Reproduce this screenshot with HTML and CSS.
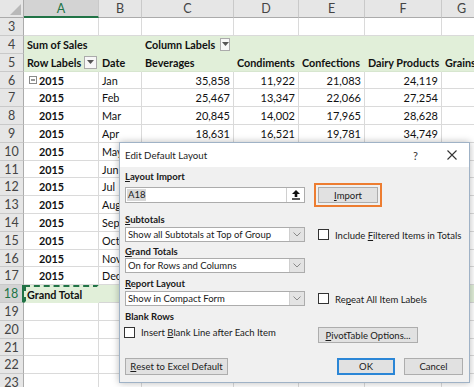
FILE: index.html
```html
<!DOCTYPE html>
<html>
<head>
<meta charset="utf-8">
<link rel="stylesheet" href="styles.css">
</head>
<body>
<div class="sheet">
  <div class="corner"><svg width="12" height="12" viewBox="0 0 12 12"><polygon points="12,1 12,12 1,12" fill="#b9b9b9"/></svg></div>
  <div class="ch sel">A</div><div class="ch">B</div><div class="ch">C</div><div class="ch">D</div><div class="ch">E</div><div class="ch">F</div><div class="ch">G</div>

  <div class="rh">3</div><div class="c"></div><div class="c"></div><div class="c"></div><div class="c"></div><div class="c"></div><div class="c"></div><div class="c"></div>

  <div class="rh">4</div>
  <div class="c g b">Sum of Sales</div><div class="c g"></div>
  <div class="c g b">Column Labels<span class="dd cdd"><svg width="7" height="4" viewBox="0 0 7 4"><polygon points="0,0 7,0 3.5,4" fill="#555"/></svg></span></div>
  <div class="c g"></div><div class="c g"></div><div class="c g"></div><div class="c g"></div>

  <div class="rh">5</div>
  <div class="c g g5 b">Row Labels<span class="dd rdd"><svg width="7" height="4" viewBox="0 0 7 4"><polygon points="0,0 7,0 3.5,4" fill="#555"/></svg></span></div>
  <div class="c g g5 b">Date</div><div class="c g g5 b">Beverages</div><div class="c g g5 b">Condiments</div><div class="c g g5 b">Confections</div><div class="c g g5 b">Dairy Products</div><div class="c g g5 b">Grains</div>

  <div class="rh">6</div>
  <div class="c b first"><span class="minus"><svg width="8" height="8" viewBox="0 0 8 8"><rect x="0.5" y="0.5" width="7" height="7" fill="#fff" stroke="#8a8a8a"/><rect x="2" y="3.5" width="4" height="1" fill="#333"/></svg></span>2015</div>
  <div class="c">Jan</div><div class="c n">35,858</div><div class="c n">11,922</div><div class="c n">21,083</div><div class="c n">24,119</div><div class="c"></div>

  <div class="rh">7</div>
  <div class="c b yr">2015</div><div class="c">Feb</div><div class="c n">25,467</div><div class="c n">13,347</div><div class="c n">22,066</div><div class="c n">27,254</div><div class="c"></div>

  <div class="rh">8</div>
  <div class="c b yr">2015</div><div class="c">Mar</div><div class="c n">20,845</div><div class="c n">14,002</div><div class="c n">17,965</div><div class="c n">28,628</div><div class="c"></div>

  <div class="rh">9</div>
  <div class="c b yr">2015</div><div class="c">Apr</div><div class="c n">18,631</div><div class="c n">16,521</div><div class="c n">19,781</div><div class="c n">34,749</div><div class="c"></div>

  <div class="rh">10</div>
  <div class="c b yr">2015</div><div class="c">May</div><div class="c"></div><div class="c"></div><div class="c"></div><div class="c"></div><div class="c"></div>
  <div class="rh">11</div>
  <div class="c b yr">2015</div><div class="c">Jun</div><div class="c"></div><div class="c"></div><div class="c"></div><div class="c"></div><div class="c"></div>
  <div class="rh">12</div>
  <div class="c b yr">2015</div><div class="c">Jul</div><div class="c"></div><div class="c"></div><div class="c"></div><div class="c"></div><div class="c"></div>
  <div class="rh">13</div>
  <div class="c b yr">2015</div><div class="c">Aug</div><div class="c"></div><div class="c"></div><div class="c"></div><div class="c"></div><div class="c"></div>
  <div class="rh">14</div>
  <div class="c b yr">2015</div><div class="c">Sep</div><div class="c"></div><div class="c"></div><div class="c"></div><div class="c"></div><div class="c"></div>
  <div class="rh">15</div>
  <div class="c b yr">2015</div><div class="c">Oct</div><div class="c"></div><div class="c"></div><div class="c"></div><div class="c"></div><div class="c"></div>
  <div class="rh">16</div>
  <div class="c b yr">2015</div><div class="c">Nov</div><div class="c"></div><div class="c"></div><div class="c"></div><div class="c"></div><div class="c"></div>
  <div class="rh">17</div>
  <div class="c b yr">2015</div><div class="c">Dec</div><div class="c"></div><div class="c"></div><div class="c"></div><div class="c"></div><div class="c"></div>

  <div class="rh sel">18</div>
  <div class="c g b ants">Grand Total</div><div class="c g gt"></div><div class="c g gt"></div><div class="c g gt"></div><div class="c g gt"></div><div class="c g gt"></div><div class="c g gt"></div>

  <div class="rh">19</div><div class="c"></div><div class="c"></div><div class="c"></div><div class="c"></div><div class="c"></div><div class="c"></div><div class="c"></div>
  <div class="rh">20</div><div class="c"></div><div class="c"></div><div class="c"></div><div class="c"></div><div class="c"></div><div class="c"></div><div class="c"></div>
  <div class="rh">21</div><div class="c"></div><div class="c"></div><div class="c"></div><div class="c"></div><div class="c"></div><div class="c"></div><div class="c"></div>
  <div class="rh">22</div><div class="c"></div><div class="c"></div><div class="c"></div><div class="c"></div><div class="c"></div><div class="c"></div><div class="c"></div>
  <div class="rh">23</div><div class="c"></div><div class="c"></div><div class="c"></div><div class="c"></div><div class="c"></div><div class="c"></div><div class="c"></div>
</div>

<div class="dialog">
  <div class="titlebar">
    <span class="title">Edit Default Layout</span>
    <span class="help">?</span>
    <span class="close"><svg width="10" height="10" viewBox="0 0 10 10"><path d="M0.5 0.5 L9.5 9.5 M9.5 0.5 L0.5 9.5" stroke="#333" stroke-width="1.1"/></svg></span>
  </div>
  <div class="dbody">
    <div class="lbl r1"><u>L</u>ayout Import</div>
    <div class="r1"></div>

    <div class="ctl r2">
      <div class="input"><span class="val"><span class="selected">A18</span></span><span class="upbtn"><svg width="8" height="10" viewBox="0 0 8 10"><polygon points="4,0 8,4 5.3,4 5.3,7 2.7,7 2.7,4 0,4" fill="#111"/><rect x="0" y="8.3" width="8" height="1.4" fill="#111"/></svg></span></div>
    </div>
    <div class="r2 impwrap"><div class="focusring"><span class="btn imp"><u>I</u>mport</span></div></div>

    <div class="lbl r3"><u>S</u>ubtotals</div>
    <div class="r3"></div>

    <div class="ctl r4">
      <div class="select"><span class="val">Show all Subtotals at Top of Group</span><span class="arrow"><svg width="8" height="5" viewBox="0 0 8 5"><path d="M0.5 0.5 L4 4 L7.5 0.5" fill="none" stroke="#8a8a8a" stroke-width="1"/></svg></span></div>
    </div>
    <div class="ctl r4"><span class="chk"></span><span class="cl">Include <u>F</u>iltered Items in Totals</span></div>

    <div class="lbl r5"><u>G</u>rand Totals</div>
    <div class="r5"></div>

    <div class="ctl r6">
      <div class="select"><span class="val">On for Rows and Columns</span><span class="arrow"><svg width="8" height="5" viewBox="0 0 8 5"><path d="M0.5 0.5 L4 4 L7.5 0.5" fill="none" stroke="#8a8a8a" stroke-width="1"/></svg></span></div>
    </div>
    <div class="r6"></div>

    <div class="lbl r7"><u>R</u>eport Layout</div>
    <div class="r7"></div>

    <div class="ctl r8">
      <div class="select"><span class="val">Show in Compact Form</span><span class="arrow"><svg width="8" height="5" viewBox="0 0 8 5"><path d="M0.5 0.5 L4 4 L7.5 0.5" fill="none" stroke="#8a8a8a" stroke-width="1"/></svg></span></div>
    </div>
    <div class="ctl r8"><span class="chk"></span><span class="cl">Re<u>p</u>eat All Item Labels</span></div>

    <div class="lbl r9">Blank Rows</div>
    <div class="r9"></div>

    <div class="ctl r10 chkrow"><span class="chk"></span><span class="cl">Insert <u>B</u>lank Line after Each Item</span></div>
    <div class="ctl r10"><span class="btn pto"><u>P</u>ivotTable Options...</span></div>

    <div class="ctl r11"><span class="btn reset"><u>R</u>eset to Excel Default</span></div>
    <div class="ctl r11 okrow"><span class="btn ok">OK</span><span class="btn cancel">Cancel</span></div>
  </div>
</div>
</body>
</html>
```

FILE: styles.css
```css
* { box-sizing: border-box; }
html, body { margin: 0; padding: 0; }
body {
  width: 474px;
  height: 387px;
  overflow: hidden;
  background: #fff;
  position: relative;
  font-family: Lato, "Liberation Sans", sans-serif;
}

.sheet {
  display: grid;
  grid-template-columns: 24px 75px 43px 92px 65px 66px 77px 40px;
  grid-template-rows: 18.3px repeat(21, 17.8px);
}

.corner {
  background: #e6e6e6;
  border-right: 1px solid #ababab;
  border-bottom: 1px solid #ababab;
  display: flex;
  align-items: flex-end;
  justify-content: flex-end;
  padding: 0 2px 2px 0;
}
.corner svg { display: block; }

.ch {
  background: #e6e6e6;
  border-right: 1px solid #c9c9c9;
  border-bottom: 1px solid #ababab;
  color: #444;
  font-size: 12.5px;
  display: flex;
  align-items: center;
  justify-content: center;
}
.ch.sel {
  background: #d3d3d3;
  color: #217346;
  border-bottom: 2px solid #217346;
}

.rh {
  background: #e6e6e6;
  border-right: 1px solid #ababab;
  border-bottom: 1px solid #c9c9c9;
  color: #444;
  font-size: 12.5px;
  display: flex;
  align-items: center;
  justify-content: center;
}
.rh.sel {
  background: #d3d3d3;
  color: #217346;
  border-right: 2px solid #217346;
}

.c {
  border-right: 1px solid #dadada;
  border-bottom: 1px solid #dadada;
  font-size: 10.8px;
  color: #111;
  padding: 0 3px;
  display: flex;
  align-items: center;
  white-space: nowrap;
  overflow: hidden;
}
.c.b { font-weight: bold; font-size: 10.8px; }
.c.n { justify-content: flex-end; padding-right: 3px; font-size: 11px; }
.c.g {
  background: #e1efd9;
  border-right-color: #e1efd9;
  border-bottom-color: #e1efd9;
}
.c.g5 { border-bottom-color: #d7e6cf; }
.c.gt { border-bottom-color: #d6d6d6; }

.c.first { padding-left: 5px; }
.minus { display: inline-flex; margin-right: 2px; }
.c.yr { padding-left: 15px; }

.dd {
  width: 13px;
  height: 13px;
  border: 1px solid #ababab;
  background: #f7f7f7;
  display: inline-flex;
  align-items: center;
  justify-content: center;
}
.rdd { margin-left: auto; margin-right: -2px; }
.cdd { margin-left: 5px; }

.ants {
  border: 2px dashed #217346;
  padding-left: 1px;
}

/* dialog */
.dialog {
  position: absolute;
  left: 119px;
  top: 142px;
  width: 351px;
  height: 241px;
  border: 1px solid #9fb2c6;
  background: #f0f0f0;
  box-shadow: 0 0 7px rgba(0,0,0,0.28);
  font-family: Lato, "Open Sans", sans-serif;
  font-size: 9.5px;
  color: #1a1a1a;
  display: flex;
  flex-direction: column;
}
.titlebar {
  height: 24px;
  background: #fff;
  display: flex;
  align-items: center;
  padding-left: 5px;
  flex: none;
}
.title { font-size: 9.7px; color: #222; }
.help { margin-left: auto; margin-right: 29px; font-size: 11px; color: #333; }
.close { display: inline-flex; margin-right: 12px; }

.dbody {
  display: grid;
  grid-template-columns: 180px 145px;
  column-gap: 13px;
  grid-template-rows: 12px 24px 19px 16px 16px 15px 17px 16px 17px 20px 32px;
  padding: 4px 5px 0 5px;
}
.r1 { grid-row: 1; }
.r2 { grid-row: 2; }
.r3 { grid-row: 3; }
.r4 { grid-row: 4; }
.r5 { grid-row: 5; }
.r6 { grid-row: 6; }
.r7 { grid-row: 7; }
.r8 { grid-row: 8; }
.r9 { grid-row: 9; }
.r10 { grid-row: 10; }
.r11 { grid-row: 11; }

.lbl {
  font-weight: bold;
  line-height: 12px;
  align-self: end;
  white-space: nowrap;
}
.ctl {
  display: flex;
  align-items: center;
  align-self: end;
  white-space: nowrap;
}
.r2.ctl { align-self: center; }

.input {
  width: 180px;
  height: 16px;
  background: #fff;
  border: 1px solid #acacac;
  display: flex;
  align-items: stretch;
}
.input .val { flex: 1; display: flex; align-items: center; padding-left: 1px; }
.selected { background: #d9d9d9; padding: 0 1px; line-height: 12px; }
.upbtn {
  width: 18px;
  border-left: 1px solid #d0d0d0;
  display: flex;
  align-items: center;
  justify-content: center;
}

.impwrap { margin-left: -4px; display: flex; align-items: center; }
.focusring {
  border: 2px solid #ed7d31;
  padding: 2px;
  display: flex;
}

.btn {
  background: #e1e1e1;
  border: 1px solid #adadad;
  display: inline-flex;
  align-items: center;
  justify-content: center;
  color: #1a1a1a;
  white-space: nowrap;
}
.imp { width: 60px; height: 16px; }
.pto { width: 100px; height: 16px; }
.reset { width: 103px; height: 17px; }
.okrow { justify-content: flex-end; }
.ok { width: 58px; height: 17px; border: 2px solid #2b86d6; margin-right: 9px; }
.cancel { width: 59px; height: 17px; }

.select {
  width: 180px;
  height: 15px;
  background: #fff;
  border: 1px solid #acacac;
  display: flex;
  align-items: stretch;
}
.select .val { flex: 1; display: flex; align-items: center; padding-left: 2px; }
.select .arrow {
  width: 15px;
  background: #e3e3e3;
  border-left: 1px solid #cfcfcf;
  display: flex;
  align-items: center;
  justify-content: center;
}

.chk {
  width: 11px;
  height: 11px;
  background: #fff;
  border: 1px solid #333;
  flex: none;
}
.r4 .chk, .r8 .chk { margin-bottom: 2px; }
.cl { margin-left: 6px; }
.chkrow { align-self: start; margin-top: 4px; margin-left: -1px; }
```
